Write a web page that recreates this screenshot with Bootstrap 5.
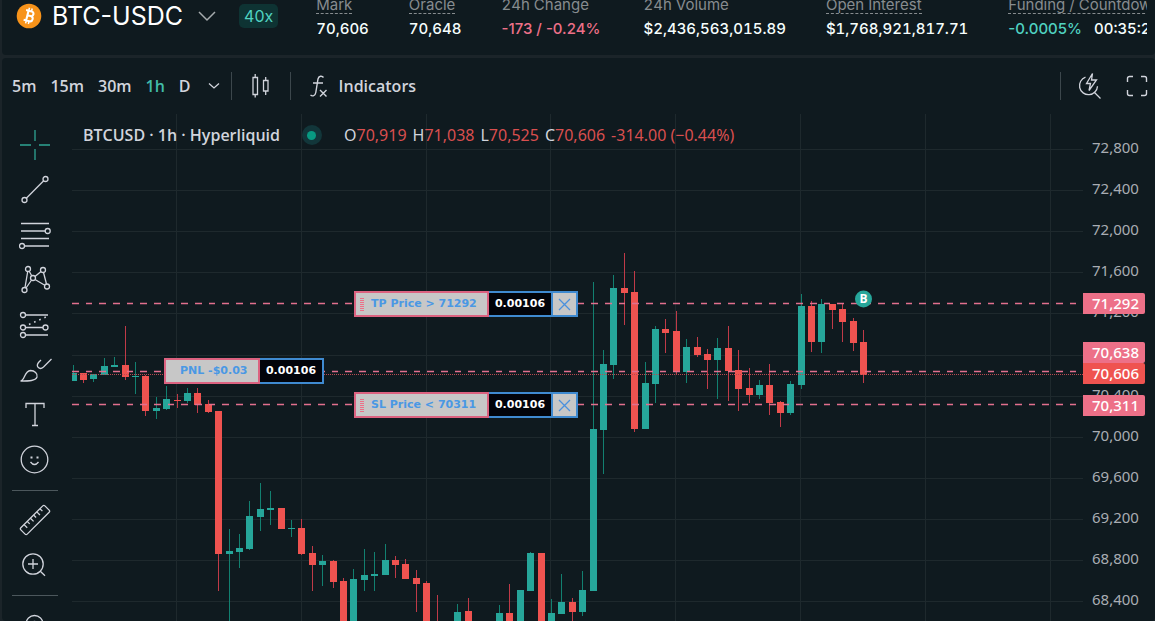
<!DOCTYPE html>
<html lang="en" data-bs-theme="dark">
<head>
<meta charset="utf-8">
<meta name="viewport" content="width=device-width, initial-scale=1">
<title>BTC-USDC</title>
<link href="https://cdn.jsdelivr.net/npm/bootstrap@5.3.0/dist/css/bootstrap.min.css" rel="stylesheet">
<style>
:root{--panel:#0f1a1f;--edge:#1b2429;--soft:#d1d4dc;--teal:#26a69a;--red:#ef5350;--pink:#ed7088}
body{background:var(--edge);color:#f6fefd;font-family:Inter,"Liberation Sans",sans-serif;font-size:15px}
button{font-family:inherit}
.panel{background:var(--panel);border-radius:4px;margin-left:2px}
.market-bar{margin-top:-10px;height:65px;padding:0 8px 0 14px}
.market-inner{padding-top:3px}
.pair{font-size:25px;line-height:32px;color:#fff;margin:0 15px 0 6px}
.pair-btn{margin-top:7px;height:32px}
.pair-btn .arrow{stroke:#a5abad}
.pair-btn .coin{stroke:none}
.lev{background:#0e3333;color:#50d2c1;border-radius:5px;font-size:16px;line-height:24px;padding:0 5px;margin:11px 0 0 23px}
.stats{gap:40px;margin-left:38px;min-width:0;font-variant-numeric:tabular-nums}
.stats dt{font-weight:400;color:#878c8f;line-height:18px;margin:3px 0 0;padding:0;height:18px}
.stats dt span{border-bottom:1px dashed #878c8f;display:inline-block;line-height:16px}
.stats dd{margin:4px 0 0;line-height:22px;font-weight:500}
.stats div{white-space:nowrap;flex:none}
.stats .change{min-width:102px}
.down,.up{font-variant-numeric:normal}
.down{color:var(--pink)}.up{color:#50d2c1}
.tv{font-family:"Open Sans","Noto Sans",sans-serif;color:var(--soft);margin-top:3px}
.tool-row{height:56px;font-size:16px;font-weight:600;padding:0 6px 0 10px}
.plain{background:none;border:0;padding:0;color:inherit;font-weight:inherit;font-size:inherit;line-height:24px}
.intervals .plain{margin-right:14px}
.intervals .plain:nth-child(5){margin-right:17px}
.intervals .plain:last-child{margin-right:11px}
.intervals .active{color:#42bda8}
.candle-btn{margin:0 18px}
.search-btn{margin:0 18px 0 16px}
.fx-btn{margin-left:18px;gap:10px}
.vr-line{width:1px;height:28px;background:#3c474c}
.side{width:70px;padding:8px 2px 0 0}
.side button{height:45px;width:66px;display:flex;align-items:center;justify-content:center}
.side button.chosen{color:#2fa594}
.side hr{width:46px;margin:8px 0 6px 10px;border-color:#8a9499;opacity:.5}
svg{fill:none;stroke:currentColor;display:block;flex:none}
.chart svg.plot{width:100%;height:100%;stroke:none;overflow:hidden}
.axis{width:72px}
.axis span,.axis b{position:absolute;left:0;font-size:15px;line-height:20px;padding-left:9px;font-family:"Noto Sans",sans-serif}
.axis span{color:#a9adb3}
.axis b{width:62px;font-weight:500;color:#fff;background:var(--pink);border-radius:0 2px 2px 0;line-height:21px}
.axis b.last{background:var(--red)}
.legend{position:absolute;left:11px;top:9px;white-space:nowrap;font-size:16px;line-height:24px}
.sym{font-weight:600}
.live{width:20px;height:20px;border-radius:50%;background:#12363a;margin:0 22px;display:flex;align-items:center;justify-content:center}
.live i{width:9px;height:9px;border-radius:50%;background:#089981}
.ohlc{gap:6px;font-family:"Noto Sans",sans-serif}.ohlc em{font-style:normal;color:#d94f4f}
.order{position:absolute;display:flex;height:26px;font:bold 11px/21px "DejaVu Sans",sans-serif}
.order>*{border:2px solid #3f8ad0;height:26px}
.order .what{background:#c7c7c7;color:#4a98e4;border-color:#dc6280;width:135px;padding-left:15px}
.order .what.grip{background:#c7c7c7 repeating-linear-gradient(#ed7088 0 1px,transparent 1px 2px) 4px 5px/4px 13px no-repeat}
.order .what.pnl{width:96px;padding-left:14px}
.order .amt{background:#02040a;color:#fff;width:64px;text-align:center;border-left:0}
.order .kill{background:#c7c7c7;width:25px;border-left:0;padding:0;display:flex;align-items:center;justify-content:center;color:#4a90dd}
.order.tp{left:282px;top:177px}
.order.sl{left:282px;top:278px}
.order.pos{left:92px;top:244px}
</style>
</head>
<body class="vh-100 overflow-hidden d-flex flex-column">
<header class="panel market-bar flex-shrink-0 overflow-hidden">
 <div class="market-inner d-flex align-items-start overflow-hidden">
  <button class="plain pair-btn d-flex align-items-center flex-shrink-0 text-nowrap" aria-label="Choose market">
   <svg class="coin" width="30" height="26" viewBox="0 0 30 26"><circle cx="13" cy="13" r="12.3" fill="#f7931a"/><g transform="translate(13.3 13) rotate(14)" stroke="#fff" fill="none"><path stroke-width="2.1" d="M-2-5v10M-4.500-5H1.200a2.400 2.400 0 0 1 0 4.800H-2M1.400-.2a2.600 2.600 0 0 1 0 5.200h-6"/><path stroke-width="1.500" d="M-1.800-8v3M1-8v3M-1.800 5v3M1 5v3"/></g></svg>
   <span class="pair">BTC-USDC</span>
   <svg class="arrow" width="18" height="12" viewBox="0 0 18 12" stroke-width="1.500"><path d="M1 2l8 8 8-8"/></svg>
  </button>
  <span class="lev flex-shrink-0">40x</span>
  <dl class="stats d-flex mb-0 overflow-hidden">
   <div><dt><span>Mark</span></dt><dd>70,606</dd></div>
   <div><dt><span>Oracle</span></dt><dd>70,648</dd></div>
   <div class="change"><dt>24h Change</dt><dd class="down">-173 / -0.24%</dd></div>
   <div><dt>24h Volume</dt><dd>$2,436,563,015.89</dd></div>
   <div><dt><span>Open Interest</span></dt><dd>$1,768,921,817.71</dd></div>
   <div><dt><span>Funding / Countdown</span></dt><dd><span class="up me-2 pe-1">-0.0005%</span>00:35:24</dd></div>
  </dl>
 </div>
</header>
<main class="panel tv flex-grow-1 d-flex flex-column overflow-hidden">
 <nav class="tool-row d-flex align-items-center flex-shrink-0">
  <div class="d-flex intervals">
   <button class="plain">5m</button><button class="plain">15m</button><button class="plain">30m</button><button class="plain active">1h</button><button class="plain">D</button>
   <button class="plain d-flex align-items-center" aria-label="More intervals"><svg width="12" height="8" viewBox="0 0 12 8" stroke-width="1.300"><path d="M1 1.500l5 4.500 5-4.500"/></svg></button>
  </div>
  <span class="vr-line"></span>
  <button class="plain candle-btn" aria-label="Candles"><svg width="22" height="28" viewBox="0 0 22 28" stroke-width="1.300"><path d="M3 5.500h4.500v17H3zM5.200 2v3.500M5.200 22.500v3M13.500 8.500H18v10.500h-4.500zM15.700 5v3.500M15.700 19v4"/></svg></button>
  <span class="vr-line"></span>
  <button class="plain fx-btn d-flex align-items-center"><svg width="20" height="26" viewBox="0 0 20 26" stroke-width="1.400"><path d="M14.500 4.500C13 2.500 9.700 2.800 9 6L6.800 19.500C6.200 22.800 3.500 23.800 1.500 22M4 10h10M11 17l6.500 6.500M17.500 17L11 23.500"/></svg><span>Indicators</span></button>
  <span class="vr-line ms-auto"></span>
  <button class="plain search-btn" aria-label="Quick search"><svg width="26" height="28" viewBox="0 0 26 28" stroke-width="1.300"><path d="M8.500 5.200a9 9 0 1 0 12 9M17 20l6.500 6.500M15.500 1.500L9.500 11.500h4l-1.500 7L19.500 8h-5z"/></svg></button>
  <button class="plain ms-1" aria-label="Fullscreen"><svg width="24" height="24" viewBox="0 0 24 24" stroke-width="1.400"><path d="M2.500 8V4.500a2 2 0 0 1 2-2H8M16 2.500h3.500a2 2 0 0 1 2 2V8M21.500 16v3.500a2 2 0 0 1-2 2H16M8 21.500H4.500a2 2 0 0 1-2-2V16"/></svg></button>
 </nav>
 <div class="d-flex flex-grow-1 overflow-hidden">
  <aside class="side flex-shrink-0 overflow-hidden">
   <button class="plain chosen" aria-label="Cross"><svg width="32" height="32" viewBox="0 0 32 32" stroke-width="1.300"><path d="M16 1v11M16 20v11M1 16h11M20 16h11"/></svg></button>
   <button class="plain" aria-label="Trend line"><svg width="32" height="32" viewBox="0 0 32 32" stroke-width="1.300"><circle cx="5.500" cy="26" r="2.500"/><circle cx="26.500" cy="5" r="2.500"/><path d="M7.300 24.200L24.700 6.800"/></svg></button>
   <button class="plain" aria-label="Fib retracement"><svg width="32" height="32" viewBox="0 0 32 32" stroke-width="1.300"><path d="M2 4.500h28M2 12h24M2 19.500h28M6 27h24"/><circle cx="28.700" cy="12" r="2.500"/><circle cx="3" cy="27" r="2.500"/></svg></button>
   <button class="plain" aria-label="Patterns"><svg width="32" height="32" viewBox="0 0 32 32" stroke-width="1.300"><circle cx="9" cy="5" r="2.500"/><circle cx="24" cy="6" r="2.500"/><circle cx="14" cy="14" r="2.500"/><circle cx="5.500" cy="26" r="2.500"/><circle cx="28" cy="22.500" r="2.500"/><path d="M8.700 7.500L6 23.500M10.200 7.200l2.500 4.600M16 12.600l6-5M16 15.500l9.800 5.700M12.600 16L7 24M24.500 8.500l3 11.500"/></svg></button>
   <button class="plain" aria-label="Forecast"><svg width="32" height="32" viewBox="0 0 32 32" stroke-width="1.300"><circle cx="4" cy="6" r="2.500"/><circle cx="4" cy="18.500" r="2.500"/><circle cx="26.500" cy="18.500" r="2.500"/><circle cx="4" cy="26" r="2.500"/><path d="M6.500 6H29M6.500 18.500H24M6.500 26H29"/><path stroke-width="1.600" stroke-dasharray="1.600 4" d="M10 15.500l18-8"/></svg></button>
   <button class="plain" aria-label="Brush"><svg width="34" height="32" viewBox="0 0 34 32" stroke-width="1.300"><path d="M2.500 27c4.500 0 3.500-10 10-10.500 4 0 7.500 3 6.500 6.500-1.500 4-8 4-16.500 4zM33.500 5L25.500 13c-4 3.500-8-.5-5-4.500L23 6"/></svg></button>
   <button class="plain" aria-label="Text"><svg width="32" height="32" viewBox="0 0 32 32" stroke-width="1.300"><path d="M7 9V4.500h18V9M16 4.500v22M13 26.500h6"/></svg></button>
   <button class="plain" aria-label="Icons"><svg width="32" height="32" viewBox="0 0 32 32" stroke-width="1.300"><circle cx="15.500" cy="15.500" r="13.300"/><path d="M11.500 18q4 5 8 0"/><path stroke-width="2.200" d="M11.500 13.500h2M17.500 13.500h2"/></svg></button>
   <hr>
   <button class="plain" aria-label="Measure"><svg width="32" height="32" viewBox="0 0 32 32" stroke-width="1.300"><g transform="rotate(-45 16 16)"><rect x="-1" y="11.500" width="34" height="9" rx="1.500"/><path d="M5 11.500v4.500M9.500 11.500v3.500M14 11.500v4.500M18.500 11.500v3.500M23 11.500v4.500M27.500 11.500v3.500"/></g></svg></button>
   <button class="plain" aria-label="Zoom in"><svg width="32" height="32" viewBox="0 0 32 32" stroke-width="1.300"><circle cx="14" cy="15" r="10.200"/><path d="M14 10v10M9 15h10M21.300 22.200l4.700 4.500"/></svg></button>
   <hr>
   <button class="plain" aria-label="Magnet"><svg width="32" height="32" viewBox="0 0 32 32" stroke-width="1.300"><path d="M7 15a8.500 8.500 0 0 1 17 0v13h-6V15a2.500 2.500 0 0 0-5 0v13H7z"/></svg></button>
  </aside>
  <section class="chart position-relative flex-grow-1 overflow-hidden">
   <svg class="plot" id="plot" role="img" aria-label="BTCUSD hourly candles"></svg>
   <div class="legend d-flex align-items-center"><span class="sym">BTCUSD · 1h · Hyperliquid</span><span class="live"><i></i></span>
    <span class="d-flex ohlc"><span>O<em>70,919</em></span><span>H<em>71,038</em></span><span>L<em>70,525</em></span><span>C<em>70,606</em></span><em>-314.00 (−0.44%)</em></span></div>
   <div class="order tp"><span class="what grip">TP Price &gt; 71292</span><span class="amt">0.00106</span><button class="kill" aria-label="Cancel take profit"><svg width="13" height="13" viewBox="0 0 13 13" stroke-width="1.300"><path d="M1 1l11 11M12 1L1 12"/></svg></button></div>
   <div class="order pos"><span class="what pnl">PNL -$0.03</span><span class="amt">0.00106</span></div>
   <div class="order sl"><span class="what grip">SL Price &lt; 70311</span><span class="amt">0.00106</span><button class="kill" aria-label="Cancel stop loss"><svg width="13" height="13" viewBox="0 0 13 13" stroke-width="1.300"><path d="M1 1l11 11M12 1L1 12"/></svg></button></div>
  </section>
  <div class="axis position-relative flex-shrink-0" id="axis"></div>
 </div>
</main>
<script src="https://cdn.jsdelivr.net/npm/bootstrap@5.3.0/dist/js/bootstrap.bundle.min.js"></script>
<script>
// Each candle, newest first: [bars ago, rising, high, low, body top, body bottom]
const candles=[[0,0,216,269,228,261],[1,0,204,237,207,229],[2,0,190,228,195,208],[3,0,190,215,190,196],[4,1,185,239,190,228],[5,0,187,238,192,228],[6,1,180,275,192,271],[7,1,267,301,270,299],[8,0,287,313,288,299],[9,0,250,301,271,289],[10,1,266,285,271,281],[11,0,254,289,274,281],[12,0,236,297,256,275],[13,0,212,287,234,257],[14,1,224,285,234,246],[15,0,235,275,240,246],[16,0,223,243,233,241],[17,1,225,269,233,258],[18,0,197,260,217,258],[19,0,205,239,215,219],[20,1,212,289,215,270],[21,1,248,315,269,315],[22,0,157,318,178,315],[23,0,139,211,174,179],[24,1,161,265,174,251],[25,1,236,360,250,316],[26,1,168,477,315,477],[27,1,457,502,476,498],[28,0,484,520,488,498],[29,1,460,500,488,500],[30,1,485,520,499,520],[31,0,439,520,439,520],[32,1,438,477,439,477],[33,1,476,520,476,520],[34,0,470,520,499,520],[35,1,491,520,499,520],[38,0,484,520,497,520],[39,1,490,520,498,520],[41,0,481,520,520,521],[42,0,467,520,469,520],[43,0,456,498,464,470],[44,0,445,465,450,465],[45,0,442,464,446,451],[46,1,430,461,446,461],[47,1,438,477,460,462],[48,1,435,477,461,466],[49,1,455,520,465,520],[50,0,464,520,467,520],[51,0,446,474,447,468],[52,1,441,472,447,451],[53,0,432,477,439,451],[54,0,405,441,414,440],[55,1,406,423,414,415],[56,0,394,415,394,415],[57,1,377,411,394,396],[58,1,369,417,395,403],[59,1,387,436,402,435],[60,1,420,454,434,438],[61,1,415,520,437,440],[62,0,297,477,297,440],[63,0,286,299,290,298],[64,0,274,299,279,291],[65,1,274,289,279,287],[66,0,280,294,286,287],[67,1,272,296,285,295],[68,1,283,305,294,297],[69,0,261,302,262,297],[70,1,248,280,262,263],[71,0,212,266,251,263],[72,1,243,253,251,253],[73,1,244,261,252,261],[74,1,260,268,260,265],[75,0,259,269,259,266],[76,1,251,267,259,267]];
let s='',labels='';
for(let i=0;i<12;i++){
 const y=Math.round(35+i*41.1);
 s+=`<rect y="${y}" width="100%" height="1" fill="#1e292d"/>`;
 labels+=`<span style="top:${y-12}px">${(72800-i*400).toLocaleString('en-US')}</span>`;
}
for(let i=0;i<16;i++)s+=`<rect x="${Math.round(104+i*124.8)}" width="1" height="100%" fill="#1e292d"/>`;
for(const [ago,up,hi,lo,top,bot] of candles){
 const x=788-Math.round(ago*10.4);
 s+=`<rect x="${x+3}" y="${hi}" width="1" height="${lo-hi}" fill="${up?'#128070':'#c03a48'}"/><rect x="${x}" y="${top}" width="7" height="${bot-top}" fill="${up?'#26a69a':'#ef5350'}"/>`;
}
for(const y of [189,257,290])s+=`<line x2="100%" y1="${y}.5" y2="${y}.5" stroke="#e2708e" stroke-width="1.400" stroke-dasharray="7 7 6 7 7 7"/>`;
s+='<line x2="100%" y1="260.5" y2="260.5" stroke="#b84a52" stroke-dasharray="1 1"/>';
s+='<circle cx="791.5" cy="185" r="8.500" fill="#26a69a"/><text x="791.5" y="189" text-anchor="middle" font-size="12" font-weight="700" fill="#fff">B</text>';
document.getElementById('plot').innerHTML=s;
labels+='<b style="top:179px">71,292</b><b style="top:228px">70,638</b><b class="last" style="top:249px">70,606</b><b style="top:281px">70,311</b>';
document.getElementById('axis').innerHTML=labels;
</script>
</body>
</html>
